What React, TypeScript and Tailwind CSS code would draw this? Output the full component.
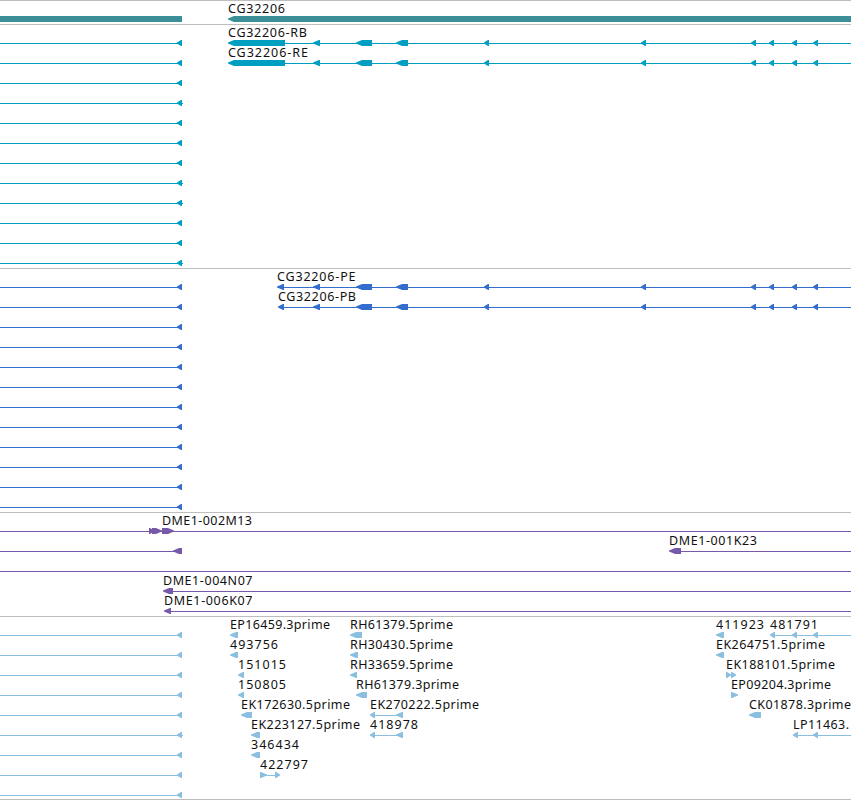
type Feature = {
  from: number;
  to: number;
  dir?: "left" | "right" | "none";
};

type Label = {
  x: number;
  width: number;
  text: string;
};

type Row = {
  lines?: [number, number][];
  features?: Feature[];
  labels?: Label[];
};

type TrackProps = {
  color: string;
  rows: Row[];
  className?: string;
};

const WIDTH = 851;

function shape({ from, to, dir = "left" }: Feature) {
  const tip = Math.min(to - from - 1, 6);
  if (dir === "none") {
    return `M${from} 14H${to}V20H${from}Z`;
  }
  if (dir === "right") {
    return `M${from} 14H${to - tip}L${to} 16.4V17.6L${to - tip} 20H${from}Z`;
  }
  return `M${to} 14H${from + tip}L${from} 16.4V17.6L${from + tip} 20H${to}Z`;
}

function TrackRow({ row, color }: { row: Row; color: string }) {
  return (
    <svg className="block h-5 w-[851px] overflow-visible" viewBox="0 0 851 20">
      {row.lines?.map(([from, to]) => (
        <rect key={from} x={from} y={17} width={to - from} height={1} fill={color} />
      ))}
      {row.features?.map((feature) => (
        <path key={feature.from} d={shape(feature)} fill={color} />
      ))}
      {row.labels?.map((label) => (
        <text
          key={label.text}
          className="font-['Noto_Sans','DejaVu_Sans',sans-serif] text-[12.5px]"
          x={label.x}
          y={11}
          textLength={label.width}
          fill="#111"
        >
          {label.text}
        </text>
      ))}
    </svg>
  );
}

function Track({ color, rows, className = "pb-0.5" }: TrackProps) {
  return (
    <section className={`border-t border-[#bebebe] pt-px ${className}`}>
      {rows.map((row, index) => (
        <TrackRow key={index} row={row} color={color} />
      ))}
    </section>
  );
}

const leftEnd: Row = { lines: [[0, 182]], features: [{ from: 177, to: 182 }] };
const leftEndWide: Row = { lines: [[0, 183]], features: [{ from: 177, to: 182 }] };

const exons: Feature[] = [
  { from: 313, to: 320 },
  { from: 356, to: 372 },
  { from: 396, to: 408 },
  { from: 484, to: 489 },
  { from: 641, to: 646 },
  { from: 751, to: 756 },
  { from: 769, to: 774 },
  { from: 792, to: 797 },
  { from: 813, to: 818 },
];

function spliced(text: string, x: number, width: number, first: Feature): Row {
  return {
    lines: [[0, 182], [first.from + 4, WIDTH]],
    features: [{ from: 177, to: 182 }, first, ...exons],
    labels: [{ x, width, text }],
  };
}

const genes: Row[] = [
  {
    features: [
      { from: 0, to: 182, dir: "none" },
      { from: 228, to: 860 },
    ],
    labels: [{ x: 228, width: 57, text: "CG32206" }],
  },
];

const transcripts: Row[] = [
  spliced("CG32206-RB", 228, 79, { from: 228, to: 285 }),
  spliced("CG32206-RE", 228, 80, { from: 228, to: 285 }),
  leftEnd,
  leftEndWide,
  leftEnd,
  leftEnd,
  leftEnd,
  leftEndWide,
  leftEndWide,
  leftEnd,
  leftEnd,
  leftEndWide,
];

const proteins: Row[] = [
  spliced("CG32206-PE", 277, 78.5, { from: 277, to: 284 }),
  spliced("CG32206-PB", 278, 78, { from: 278, to: 284 }),
  ...Array<Row>(10).fill(leftEnd),
];

const clones: Row[] = [
  {
    lines: [[0, WIDTH]],
    features: [
      { from: 149, to: 154, dir: "right" },
      { from: 152, to: 162, dir: "right" },
      { from: 162, to: 174, dir: "right" },
    ],
    labels: [{ x: 162, width: 90, text: "DME1-002M13" }],
  },
  {
    lines: [[0, 182], [672, WIDTH]],
    features: [{ from: 173, to: 182 }, { from: 669, to: 681 }],
    labels: [{ x: 669, width: 88, text: "DME1-001K23" }],
  },
  { lines: [[0, WIDTH]] },
  {
    lines: [[166, WIDTH]],
    features: [{ from: 163, to: 173 }],
    labels: [{ x: 163, width: 89.5, text: "DME1-004N07" }],
  },
  {
    lines: [[167, WIDTH]],
    features: [{ from: 164, to: 171 }],
    labels: [{ x: 164, width: 88.5, text: "DME1-006K07" }],
  },
];

const ests: Row[] = [
  {
    lines: [[0, 182], [772, WIDTH]],
    features: [
      { from: 177, to: 182 },
      { from: 230, to: 238 },
      { from: 350, to: 362 },
      { from: 716, to: 724 },
      { from: 770, to: 775 },
      { from: 792, to: 797 },
      { from: 813, to: 818 },
    ],
    labels: [
      { x: 230, width: 100, text: "EP16459.3prime" },
      { x: 350, width: 103, text: "RH61379.5prime" },
      { x: 716, width: 48, text: "411923" },
      { x: 770, width: 48, text: "481791" },
    ],
  },
  {
    lines: [[0, 182]],
    features: [
      { from: 177, to: 182 },
      { from: 230, to: 238 },
      { from: 350, to: 358 },
      { from: 716, to: 724 },
    ],
    labels: [
      { x: 230, width: 48, text: "493756" },
      { x: 350, width: 103, text: "RH30430.5prime" },
      { x: 716, width: 109, text: "EK264751.5prime" },
    ],
  },
  {
    lines: [[0, 182]],
    features: [
      { from: 177, to: 182 },
      { from: 238, to: 244 },
      { from: 350, to: 357 },
      { from: 726, to: 731, dir: "right" },
      { from: 731, to: 736, dir: "right" },
    ],
    labels: [
      { x: 238, width: 48, text: "151015" },
      { x: 350, width: 103, text: "RH33659.5prime" },
      { x: 726, width: 109, text: "EK188101.5prime" },
    ],
  },
  {
    lines: [[0, 182]],
    features: [
      { from: 177, to: 182 },
      { from: 238, to: 244 },
      { from: 356, to: 367 },
      { from: 731, to: 738, dir: "right" },
    ],
    labels: [
      { x: 238, width: 48, text: "150805" },
      { x: 356, width: 103, text: "RH61379.3prime" },
      { x: 731, width: 100, text: "EP09204.3prime" },
    ],
  },
  {
    lines: [[0, 182], [372, 403]],
    features: [
      { from: 177, to: 182 },
      { from: 241, to: 252 },
      { from: 370, to: 375 },
      { from: 396, to: 403 },
      { from: 749, to: 761 },
    ],
    labels: [
      { x: 241, width: 109, text: "EK172630.5prime" },
      { x: 370, width: 109, text: "EK270222.5prime" },
      { x: 749, width: 102, text: "CK01878.3prime" },
    ],
  },
  {
    lines: [[0, 183], [372, 403], [795, WIDTH]],
    features: [
      { from: 177, to: 182 },
      { from: 251, to: 260 },
      { from: 370, to: 375 },
      { from: 396, to: 403 },
      { from: 793, to: 798 },
      { from: 813, to: 818 },
    ],
    labels: [
      { x: 251, width: 109, text: "EK223127.5prime" },
      { x: 370, width: 48, text: "418978" },
      { x: 793, width: 56, text: "LP11463." },
    ],
  },
  {
    lines: [[0, 182]],
    features: [{ from: 177, to: 182 }, { from: 251, to: 260 }],
    labels: [{ x: 251, width: 48, text: "346434" }],
  },
  {
    lines: [[0, 182], [262, 278]],
    features: [
      { from: 177, to: 182 },
      { from: 260, to: 267, dir: "right" },
      { from: 275, to: 280, dir: "right" },
    ],
    labels: [{ x: 260, width: 48, text: "422797" }],
  },
  leftEnd,
];

export default function App() {
  return (
    <main className="h-[800px] w-[851px] overflow-hidden border-b border-[#bebebe] bg-white">
      <Track color="#3c8f96" rows={genes} />
      <Track color="#009fc1" rows={transcripts} />
      <Track color="#336dce" rows={proteins} />
      <Track color="#7759a9" rows={clones} />
      <Track color="#8abfdf" rows={ests} className="pb-0" />
    </main>
  );
}
